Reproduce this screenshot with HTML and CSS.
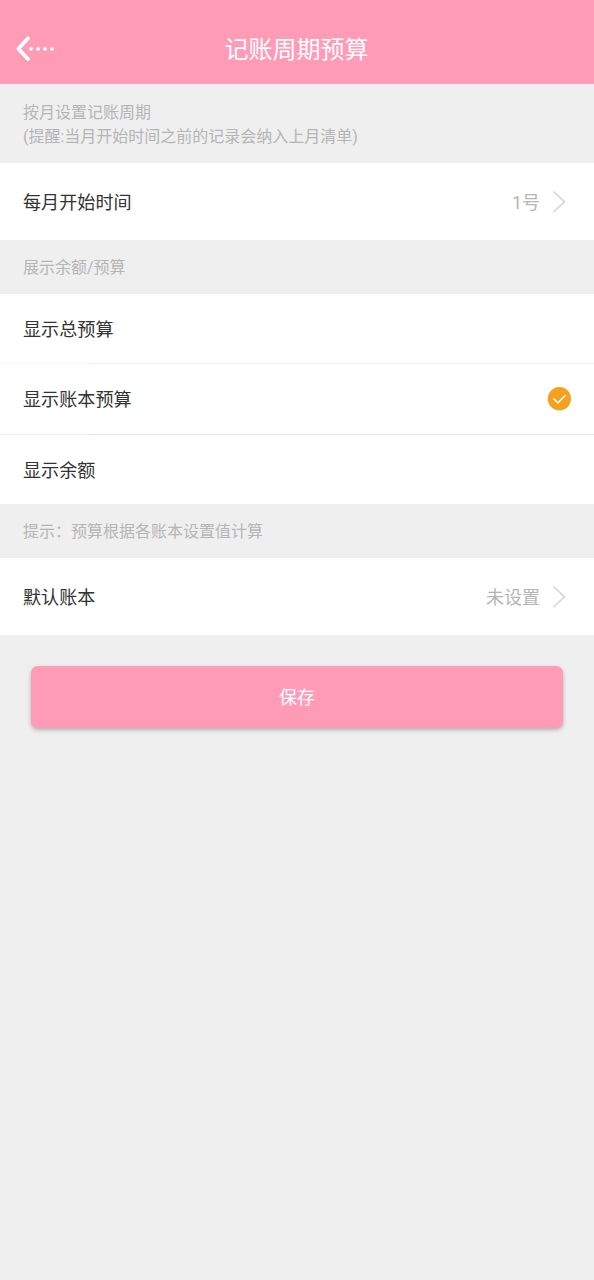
FILE: index.html
```html
<!DOCTYPE html>
<html lang="zh-CN">
<head>
<meta charset="utf-8">
<title>记账周期预算</title>
<link rel="stylesheet" href="styles.css">
</head>
<body>
<header class="bar">
  <svg class="back" width="44" height="30" viewBox="0 0 44 30"><path d="M14 4.3L4.4 14.8 14 25.1" fill="none" stroke="#fff" stroke-width="3.8" stroke-linecap="round" stroke-linejoin="round"/><g fill="#fff"><circle cx="17" cy="14.8" r="1.9"/><circle cx="24" cy="14.8" r="1.9"/><circle cx="31" cy="14.8" r="1.9"/><circle cx="38" cy="14.8" r="1.9"/></g></svg>
  <h1 class="title">记账周期预算</h1>
</header>
<main>
  <p class="note note-intro">按月设置记账周期<br>(提醒:当月开始时间之前的记录会纳入上月清单)</p>
  <div class="row row-link"><span class="label">每月开始时间</span><span class="value">1号</span><svg class="chevron" width="14" height="24" viewBox="0 0 14 24"><path d="M1.5 1.5l11 10.3L1.5 22" fill="none" stroke="#d5d5d5" stroke-width="1.6"/></svg></div>
  <p class="note">展示余额/预算</p>
  <div class="options">
    <div class="row"><span class="label">显示总预算</span></div>
    <div class="row"><span class="label">显示账本预算</span><svg class="check" width="24" height="24" viewBox="0 0 24 24"><circle cx="12.4" cy="11.7" r="11.6" fill="#f5a11d"/><path d="M6.5 11.6l4.3 4.3 7.8-8" fill="none" stroke="#fff" stroke-width="1.5"/></svg></div>
    <div class="row"><span class="label">显示余额</span></div>
  </div>
  <p class="note">提示：预算根据各账本设置值计算</p>
  <div class="row row-link"><span class="label">默认账本</span><span class="value">未设置</span><svg class="chevron" width="14" height="24" viewBox="0 0 14 24"><path d="M1.5 1.5l11 10.3L1.5 22" fill="none" stroke="#d5d5d5" stroke-width="1.6"/></svg></div>
  <button class="save">保存</button>
</main>
</body>
</html>
```

FILE: styles.css
```css
* { box-sizing: border-box; }
body { margin: 0; min-height: 1280px; background: #efefef; color: #333; font: 18px/26px Roboto, "Noto Sans CJK SC", sans-serif; }
.bar { height: 84px; padding: 14px 16px 0 14px; display: grid; grid-template-columns: 44px 1fr 44px; align-items: center; background: #ff9bb7; color: #fff; }
.title { margin: 0; padding: 2px 0 0 1px; font-size: 24px; font-weight: 400; text-align: center; }
.note { margin: 0; height: 54px; padding: 16px 23px 0; color: #b5b5b5; font-size: 16px; line-height: 24px; }
.note-intro { height: 79px; padding-top: 17px; }
.row { height: 70px; padding: 0 23px; display: flex; align-items: center; background: #fff; }
.row-link { height: 77px; padding-right: 28px; }
.label, .value { padding-top: 2px; }
.label { font-size: 18.1px; }
.options .row:first-child { height: 69px; }
.options .row + .row { height: 71px; border-top: 1px solid; border-image: linear-gradient(90deg, #f8f8f8 90px, #efefef 91px) 1; }
.options .row:last-child { height: 70px; border-image: linear-gradient(90deg, #eee 90px, #e4e4e4 91px) 1; }
.value { margin-left: auto; margin-right: 12px; color: #b5b5b5; }
.check { margin-left: auto; }
.save { display: block; width: 532px; height: 62px; margin: 31px auto 0; padding: 2px 0 0; border: 0; border-radius: 7px; background: #ff9bb7; color: #fff; font: inherit; box-shadow: 0 2px 4px #0004; }
```
